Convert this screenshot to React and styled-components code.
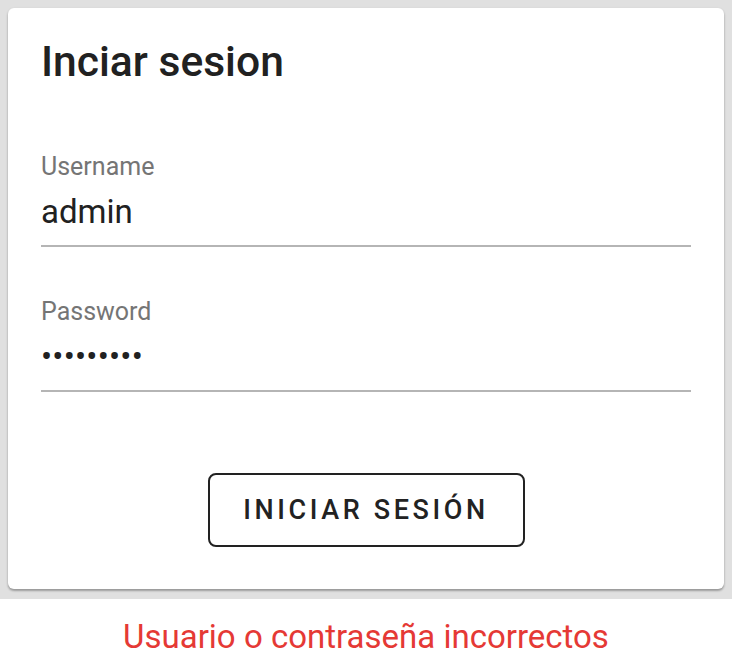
import React from 'react'
import styled, { createGlobalStyle } from 'styled-components'

const GlobalStyle = createGlobalStyle`
  body {
    margin: 0;
    background: #fff;
    font-family: Roboto, "Liberation Sans", sans-serif;
  }
`

const Backdrop = styled.div`
  background: #e0e0e0;
  padding: 8px 8px 10px;
`

const Card = styled.form`
  background: #fff;
  border-radius: 6px;
  box-shadow: 0 2px 2px rgba(0, 0, 0, 0.25), 0 1px 3px rgba(0, 0, 0, 0.12);
  padding: 28px 33px 42px;
  display: flex;
  flex-direction: column;
`

const Title = styled.h1`
  margin: 0;
  font-size: 42.6px;
  line-height: 50px;
  font-weight: 500;
  color: #212121;
`

const Field = styled.label`
  display: flex;
  flex-direction: column;
  margin-top: ${p => p.$top}px;
  border-bottom: 2px solid #b5b5b5;
`

const Label = styled.span`
  font-size: 25px;
  line-height: 25px;
  color: #757575;
`

const Input = styled.input`
  border: none;
  outline: none;
  background: transparent;
  padding: 0;
  margin: 13px 0 13px;
  font-family: inherit;
  font-size: 33px;
  line-height: 40px;
  height: 40px;
  color: #212121;
  letter-spacing: ${p => (p.type === 'password' ? '0.2px' : 'normal')};
`

const Actions = styled.div`
  display: flex;
  justify-content: center;
  margin-top: 81px;
`

const Button = styled.button`
  width: 317px;
  height: 74px;
  padding: 0;
  background: #fff;
  border: 2px solid #222;
  border-radius: 8px;
  font-family: inherit;
  font-size: 27px;
  font-weight: 500;
  letter-spacing: 3.6px;
  color: #222;
  cursor: pointer;
`

const Error = styled.p`
  margin: 25px 0 0;
  text-align: center;
  font-size: 33px;
  line-height: 26px;
  color: #e53935;
`

export default function App() {
  return (
    <>
      <GlobalStyle />
      <Backdrop>
        <Card onSubmit={e => e.preventDefault()}>
          <Title>Inciar sesion</Title>
          <Field $top={68}>
            <Label>Username</Label>
            <Input type="text" defaultValue="admin" />
          </Field>
          <Field $top={52}>
            <Label>Password</Label>
            <Input type="password" defaultValue="123456789" />
          </Field>
          <Actions>
            <Button type="submit">INICIAR SESIÓN</Button>
          </Actions>
        </Card>
      </Backdrop>
      <Error>Usuario o contraseña incorrectos</Error>
    </>
  )
}
